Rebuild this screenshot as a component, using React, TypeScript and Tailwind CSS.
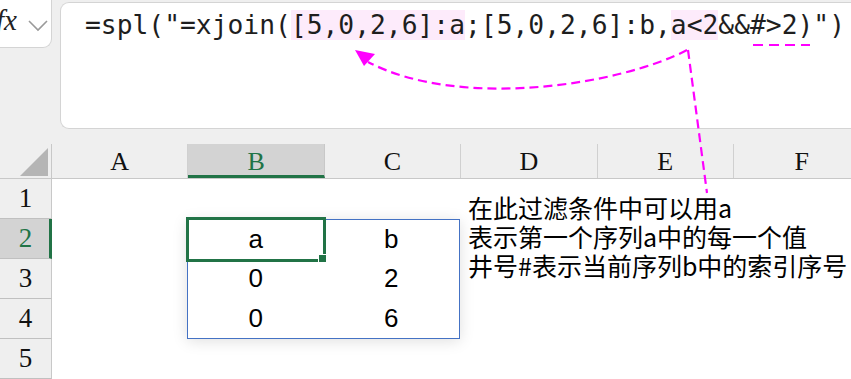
import { ReactNode } from "react";

const cols = ["A", "B", "C", "D", "E", "F"];
const rows = [1, 2, 3, 4, 5];
const cells = [
	["a", "b"],
	["0", "2"],
	["0", "6"],
];

function Mark({ children }: { children: ReactNode }) {
	return <span className="bg-[#fdebfb]">{children}</span>;
}

function FormulaBar() {
	return (
		<div className="flex h-[144px] bg-[#efefef]">
			<div className="relative w-[52px] h-[48px] shrink-0 bg-white border-r border-b border-[#d4d4d4] rounded-br-[9px] overflow-hidden">
				<span className="absolute left-[-4px] top-[6px] text-[29px] italic leading-none text-[#222]" style={{ fontFamily: '"Liberation Serif", serif' }}>
					fx
				</span>
				<svg className="absolute left-[28px] top-[20px]" width="20" height="12" viewBox="0 0 20 12">
					<polyline points="1,1 10,10 19,1" fill="none" stroke="#9a9a9a" strokeWidth="1.6" />
				</svg>
			</div>
			<div className="ml-[8px] mt-[2px] h-[127px] flex-1 bg-white border border-r-0 border-[#d4d4d4] rounded-l-[9px] pl-[24px] pt-[3px]">
				<div className="text-[26.3px] leading-[38px] text-[#1e1e1e] whitespace-pre" style={{ fontFamily: '"DejaVu Sans Mono", monospace' }}>
					=spl("=xjoin(<Mark>[5,0,2,6]:a</Mark>;[5,0,2,6]:b,<Mark>a&lt;2</Mark>&amp;&amp;#&gt;2)")
				</div>
			</div>
		</div>
	);
}

function HeaderRow() {
	return (
		<div className="flex h-[35px] bg-[#efefef] border-b border-[#c8c8c8]" style={{ fontFamily: '"Liberation Serif", serif' }}>
			<div className="relative w-[52px] shrink-0 border-r border-[#c8c8c8]">
				<svg className="absolute left-[20px] top-[4px]" width="29" height="29" viewBox="0 0 29 29">
					<polygon points="28,0 28,28 0,28" fill="#b5b5b5" />
				</svg>
			</div>
			{cols.map((c) => (
				<div
					key={c}
					className={
						c === "B"
							? "w-[136.4px] shrink-0 flex items-center justify-center text-[26px] bg-[#d3d3d3] text-[#217346] border-b-[3px] border-[#217346] border-r border-r-[#c8c8c8] pt-[3px]"
							: "w-[136.4px] shrink-0 flex items-center justify-center text-[26px] text-[#111] border-r border-[#d0d0d0]"
					}
				>
					{c}
				</div>
			))}
		</div>
	);
}

export default function App() {
	return (
		<div className="relative w-[851px] h-[379px] overflow-hidden bg-white">
			<FormulaBar />
			<HeaderRow />
			<div className="flex">
				<div className="w-[52px] shrink-0" style={{ fontFamily: '"Liberation Serif", serif' }}>
					{rows.map((r) => (
						<div
							key={r}
							className={
								r === 2
									? "h-[40px] flex items-center justify-center text-[27px] bg-[#d3d3d3] text-[#217346] border-b border-[#c0c0c0] border-r-[3px] border-r-[#217346] pl-[2px]"
									: "h-[40px] flex items-center justify-center text-[27px] bg-[#efefef] text-[#111] border-b border-[#c0c0c0] border-r border-r-[#c8c8c8]"
							}
						>
							{r}
						</div>
					))}
				</div>
				<div className="flex items-start">
					<div className="relative ml-[135px] mt-[40px] w-[273px] h-[120px] shrink-0 border border-[#4472c4] bg-white shadow-[0_2px_14px_rgba(0,0,0,0.13)]">
						<div className="grid grid-cols-2 h-full" style={{ fontFamily: '"Liberation Sans", sans-serif' }}>
							{cells.flat().map((v, i) => (
								<div key={i} className="flex items-center justify-center text-[26px] text-black">
									{v}
								</div>
							))}
						</div>
						<div className="absolute left-[-2px] top-[-3px] w-[140px] h-[45px] border-[3px] border-[#217346]" />
						<div className="absolute left-[130px] top-[34px] w-[9px] h-[9px] bg-[#217346] border border-white" />
					</div>
					<div
						className="ml-[8px] mt-[14px] text-[25px] leading-[29px] text-black whitespace-nowrap"
						style={{ fontFamily: '"Noto Sans CJK SC", "Noto Sans", sans-serif' }}
					>
						<div>在此过滤条件中可以用a</div>
						<div>表示第一个序列a中的每一个值</div>
						<div>井号#表示当前序列b中的索引序号</div>
					</div>
				</div>
			</div>
			<svg className="absolute inset-0 pointer-events-none" width="851" height="379" viewBox="0 0 851 379">
				<path d="M 687 50 C 620 85, 460 110, 368 62" fill="none" stroke="#ff00ff" strokeWidth="2.2" strokeDasharray="9 5" />
				<polygon points="355,50 375,54 364,66" fill="#ff00ff" />
				<path d="M 688 50 L 707 193" fill="none" stroke="#ff00ff" strokeWidth="2.2" strokeDasharray="9 5" />
				<path d="M 753 45 L 810 45" fill="none" stroke="#ff00ff" strokeWidth="2" strokeDasharray="10 6" />
			</svg>
		</div>
	);
}
